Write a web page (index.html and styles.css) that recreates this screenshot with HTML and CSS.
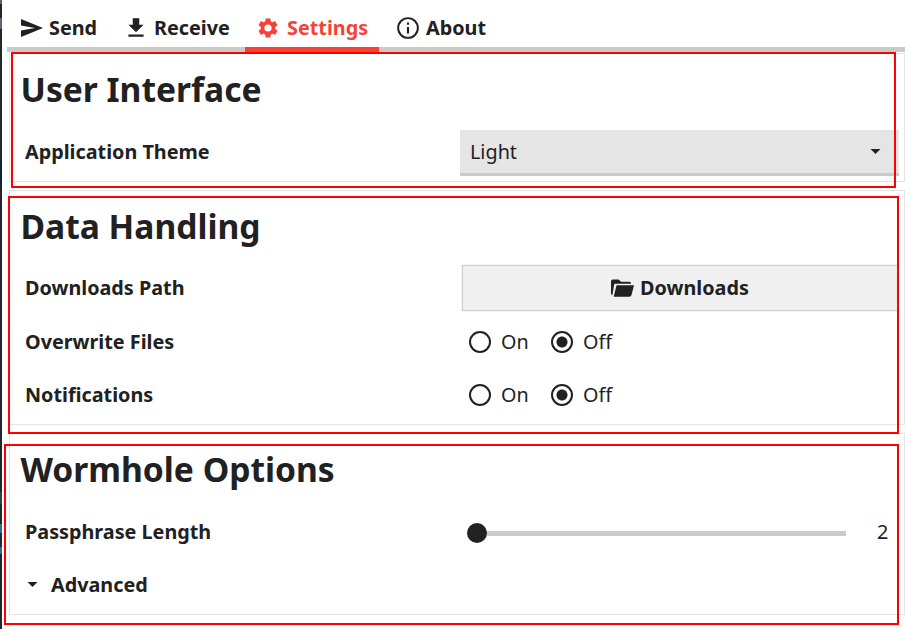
FILE: index.html
```
<!DOCTYPE html>
<html lang="en">
<head>
<meta charset="utf-8">
<title>Settings</title>
<link rel="stylesheet" href="styles.css">
</head>
<body>
<div class="window">
  <nav class="tabs">
    <a class="tab send"><svg class="icon" viewBox="0 0 24 24"><path d="M2 21 24 12 2 3v6.500l14 2.500-14 2.500z"/></svg><span>Send</span></a>
    <a class="tab receive"><svg class="icon" viewBox="0 0 24 24"><path d="M19 9h-4V3H9v6H5l7 7zM5 18v2h14v-2z"/></svg><span>Receive</span></a>
    <a class="tab settings active"><svg class="icon" viewBox="0 0 24 24"><path d="M19.140 12.940c.04-.3.060-.61.060-.94 0-.32-.02-.64-.07-.94l2.030-1.580c.18-.14.230-.41.120-.61l-1.920-3.320c-.12-.22-.37-.29-.59-.22l-2.390.96c-.5-.38-1.030-.7-1.620-.94l-.36-2.540c-.04-.24-.24-.41-.48-.41h-3.840c-.24 0-.43.170-.47.410l-.36 2.540c-.59.240-1.130.570-1.620.940l-2.390-.96c-.22-.08-.47 0-.59.220L2.740 8.870c-.12.210-.08.470.120.610l2.030 1.580c-.05.300-.09.630-.09.940s.02.640.070.940l-2.030 1.580c-.18.140-.23.410-.12.610l1.920 3.320c.12.220.37.290.59.220l2.390-.96c.5.380 1.030.7 1.620.940l.36 2.540c.05.240.24.410.48.410h3.840c.24 0 .44-.17.470-.41l.36-2.540c.59-.24 1.130-.56 1.620-.94l2.390.96c.22.080.47 0 .59-.22l1.920-3.320c.12-.22.070-.47-.12-.61zM12 15.600A3.600 3.600 0 1 1 12 8.400a3.600 3.600 0 0 1 0 7.200z"/></svg><span>Settings</span></a>
    <a class="tab about"><svg class="icon" viewBox="0 0 24 24"><path d="M11 7h2v2h-2zm0 4h2v6h-2zm1-9a10 10 0 1 0 0 20 10 10 0 0 0 0-20zm0 18.200a8.200 8.200 0 1 1 0-16.400 8.200 8.200 0 0 1 0 16.400z"/></svg><span>About</span></a>
  </nav>

  <section class="card">
    <h2>User Interface</h2>
    <div class="row">
      <div class="label">Application Theme</div>
      <div class="select"><span>Light</span><svg class="caret" viewBox="0 0 12 6"><path d="M0 0h12L6 6z"/></svg></div>
    </div>
  </section>

  <section class="card">
    <h2>Data Handling</h2>
    <div class="row path-row">
      <div class="label">Downloads Path</div>
      <div class="button"><svg class="folder" viewBox="0 0 24 18"><path d="M2 0h6l2.500 2.500H19q2 0 2 2H4.500q-1 0-1.300 1L1.500 16.500Q0 16 0 14.500V2q0-2 2-2z"/><path d="M5.800 6.200H24l-2.600 10q-.4 1.800-2.200 1.800H2.800z"/></svg><span>Downloads</span></div>
    </div>
    <div class="row">
      <div class="label">Overwrite Files</div>
      <div class="radios">
        <span class="option"><i class="radio"></i>On</span>
        <span class="option"><i class="radio checked"></i>Off</span>
      </div>
    </div>
    <div class="row">
      <div class="label">Notifications</div>
      <div class="radios">
        <span class="option"><i class="radio"></i>On</span>
        <span class="option"><i class="radio checked"></i>Off</span>
      </div>
    </div>
  </section>

  <section class="card">
    <h2>Wormhole Options</h2>
    <div class="row">
      <div class="label">Passphrase Length</div>
      <div class="slider"><i class="thumb"></i><i class="track"></i><span class="value">2</span></div>
    </div>
    <div class="row">
      <div class="label advanced"><svg class="caret" viewBox="0 0 12 6"><path d="M0 0h12L6 6z"/></svg><span>Advanced</span></div>
    </div>
  </section>

  <div class="outline outline-interface"></div>
  <div class="outline outline-data"></div>
  <div class="outline outline-wormhole"></div>
</div>
</body>
</html>
```
FILE: styles.css
```
* { box-sizing: border-box; }
body {
  margin: 0;
  background: #fff;
  color: #212121;
  font: 19.8px/28px "Noto Sans", sans-serif;
}
svg { fill: currentColor; display: block; flex: none; }
.window {
  position: relative;
  height: 629px;
  overflow: hidden;
  padding-left: 9px;
  background:
    linear-gradient(#5c6570 4px, #23262a 4px 18px, #5c6570 18px 29px, #23262a 29px 160px, #0c2338 160px 186px, #23262a 186px 492px, #27435a 492px 504px, #23262a 504px 524px, #2b6f91 524px 533px, #23262a 533px 547px, #2b6f91 547px 554px, #23262a 554px) 0 0 / 2px 100% no-repeat;
}
.tabs {
  display: flex;
  height: 52px;
  margin: 0 0 1px -2px;
  box-shadow: inset 0 -5px #cacaca;
  font-weight: 700;
}
.tab {
  display: flex;
  align-items: center;
  height: 52px;
  padding: 8px 11px 0;
  border-bottom: 5px solid transparent;
  white-space: nowrap;
}
.tab .icon { width: 24px; height: 24px; margin-right: 7px; }
.send { width: 109px; padding-left: 12px; }
.send .icon { margin-right: 6px; }
.receive { width: 129px; padding-left: 7px; }
.receive .icon { width: 26px; height: 26px; margin-right: 5px; }
.settings { width: 134px; }
.about { padding-left: 16px; }
.about .icon { width: 26px; height: 26px; margin-right: 5px; }
.active { color: #f44336; border-color: #f44336; }

.card {
  width: 896px;
  margin-bottom: 8px;
  padding-bottom: 3px;
  border: 1px solid #e4e4e4;
}
h2 {
  margin: 0;
  height: 71px;
  padding-left: 10.5px;
  font-size: 33.6px;
  line-height: 70px;
}
.row {
  display: grid;
  grid-template-columns: 435px 439px;
  align-items: center;
  height: 53px;
  padding-left: 15px;
}
.path-row { padding-bottom: 2px; }
.label { font-weight: 700; }
.caret { width: 11px; height: 5px; }
.select {
  display: flex;
  align-items: center;
  justify-content: space-between;
  height: 46px;
  margin-top: 2px;
  padding: 1px 18px 0 10px;
  border-bottom: 3px solid #cacaca;
  background: #e5e5e5;
}
.button {
  display: flex;
  align-items: center;
  justify-content: center;
  gap: 6px;
  width: 436px;
  height: 46px;
  margin-left: 2px;
  border: 1px solid #cdcdcd;
  box-shadow: 0 0 1px #bbb;
  background: #f0f0f0;
  font-weight: 700;
}
.folder { width: 23px; height: 18px; }
.radios { display: flex; padding-left: 9px; }
.option { display: flex; align-items: center; width: 82px; }
.radio {
  width: 22px;
  height: 22px;
  margin-right: 10px;
  border: 2px solid #212121;
  border-radius: 50%;
}
.checked { background: radial-gradient(circle, #212121 5px, transparent 6px); }
.slider { display: flex; align-items: center; padding-left: 7px; }
.thumb { width: 20px; height: 20px; margin-top: 2px; border-radius: 50%; background: #212121; }
.track { width: 359px; height: 5px; margin-top: 3px; background: #cacaca; }
.value { margin-left: 31px; }
.advanced { display: flex; align-items: center; gap: 13px; padding-left: 2px; }

.outline { position: absolute; border: 2px solid #f00; }
.outline-interface { left: 11px; top: 52px; width: 885px; height: 136px; }
.outline-data { left: 8px; top: 196px; width: 891px; height: 238px; }
.outline-wormhole { left: 4px; top: 444px; width: 895px; height: 181px; }
```
